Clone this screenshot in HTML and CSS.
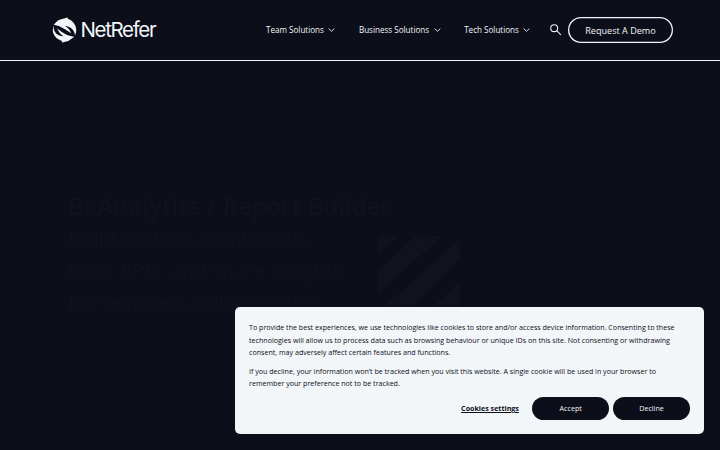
FILE: index.html
```
<!DOCTYPE html>
<html lang="en">
<head>
<meta charset="utf-8">
<title>NetRefer</title>
<link rel="stylesheet" href="styles.css">
</head>
<body>
<header class="header">
  <a class="brand">
    <svg class="mark" viewBox="0 0 26 26">
      <path d="M2 7.500C4.500 3.500 8.500 1.500 12.500 1L16 0l.8 1.500C22 3.500 25.200 8 25.200 13c0 2.500-.7 4.800-2 7L17 24.500 10.500 26l-.5-1.700C4.500 22.500.8 18 .8 13Z"/>
      <path class="band" d="M0 7.800C6 7.500 10.500 10 20 16.500 18.800 13 17 10.800 13.500 8.500c6.500.8 10.500 5 10.500 11.500-7.500-.5-12.500-3.500-18.500-8.500.8 3 3 5.500 6.500 8C5.500 19 1.500 15.500 1.800 9Z"/>
    </svg>
    <span class="wordmark">NetRefer</span>
  </a>
  <nav class="nav">
    <a class="nav-item">Team Solutions<svg class="chevron" viewBox="0 0 7 4"><path d="M.6.5 3.500 3.300 6.400.5"/></svg></a>
    <a class="nav-item">Business Solutions<svg class="chevron" viewBox="0 0 7 4"><path d="M.6.5 3.500 3.300 6.400.5"/></svg></a>
    <a class="nav-item">Tech Solutions<svg class="chevron" viewBox="0 0 7 4"><path d="M.6.5 3.500 3.300 6.400.5"/></svg></a>
  </nav>
  <svg class="search" viewBox="0 0 11 11"><circle cx="4" cy="4" r="3.300"/><path d="m6.400 6.400 4 4"/></svg>
  <a class="demo">Request A Demo</a>
</header>
<main class="hero">
  <div class="copy">
    <h1>BI Analytics / Report Builder</h1>
    <p>Build custom dashboards<br>track KPIs, and share insights<br>for seamless collaboration</p>
  </div>
  <svg class="stripes" viewBox="0 0 82 82"><path d="M0 0H20L0 18ZM38 0H64L0 58V35ZM82 3V23L23 82H0V76ZM82 45V68L68 82H43Z"/></svg>
</main>
<section class="cookies">
  <p>To provide the best experiences, we use technologies like cookies to store and/or access device information. Consenting to these<br>technologies will allow us to process data such as browsing behaviour or unique IDs on this site. Not consenting or withdrawing<br>consent, may adversely affect certain features and functions.</p>
  <p>If you decline, your information won’t be tracked when you visit this website. A single cookie will be used in your browser to<br>remember your preference not to be tracked.</p>
  <div class="actions"><a class="settings">Cookies settings</a><button>Accept</button><button>Decline</button></div>
</section>
</body>
</html>
```
FILE: styles.css
```
* { box-sizing: border-box; }
body {
  margin: 0;
  height: 450px;
  overflow: hidden;
  background: #0c0e19;
  color: #f2f6f9;
  font-family: "Open Sans", sans-serif;
}
.header {
  display: flex;
  align-items: center;
  height: 61px;
  border-bottom: 1px solid #f2f6f9;
  padding: 0 47px 0 52px;
}
.brand { display: flex; align-items: center; width: 214px; }
.mark { width: 25px; height: 26px; fill: #f2f6f9; }
.band { fill: #0c0e19; }
.wordmark {
  margin-left: 3.500px;
  font: 20.500px/26px "Inter", sans-serif;
  letter-spacing: -1.350px;
}
.nav { display: flex; width: 284px; gap: 23.500px; font-size: 8.080px; line-height: 10px; white-space: nowrap; }
.nav-item { display: flex; align-items: center; }
.chevron { width: 7px; height: 4px; margin-left: 4.500px; fill: none; stroke: #f2f6f9; stroke-width: .9; }
.search { width: 11.500px; height: 11.500px; margin-right: 6.500px; fill: none; stroke: #f2f6f9; stroke-width: 1; }
.demo {
  width: 105px;
  height: 26px;
  box-shadow: inset 0 0 0 1.300px #f2f6f9;
  border-radius: 13px;
  font-size: 9.080px;
  line-height: 27px;
  text-align: center;
}
.hero { display: flex; align-items: flex-start; padding: 128px 68px 0; color: #10121c; white-space: nowrap; }
.copy { width: 310px; }
h1 { margin: 0; font-size: 23.900px; line-height: 33px; font-weight: 600; }
.copy p { margin: 0; font-size: 20.200px; line-height: 32px; }
.stripes { width: 82px; height: 82px; margin-top: 47px; fill: #10121c; }
.cookies {
  position: absolute;
  left: 235px;
  top: 307.400px;
  width: 469px;
  height: 126.600px;
  padding: 14px;
  border-radius: 5px;
  background: #f2f6f9;
  color: #0c0e19;
  font-size: 7.110px;
  line-height: 12.200px;
  white-space: nowrap;
}
.cookies p { margin: 0 0 7px; }
.actions { display: flex; align-items: center; justify-content: flex-end; gap: 3.800px; margin-top: 7.300px; }
.settings { margin-right: 9.500px; font-weight: 700; text-decoration: underline; }
button {
  width: 77px;
  height: 23px;
  padding: 0;
  border: 0;
  border-radius: 12px;
  background: #0c0e19;
  color: #f2f6f9;
  font: 7.110px "Open Sans", sans-serif;
}
```
